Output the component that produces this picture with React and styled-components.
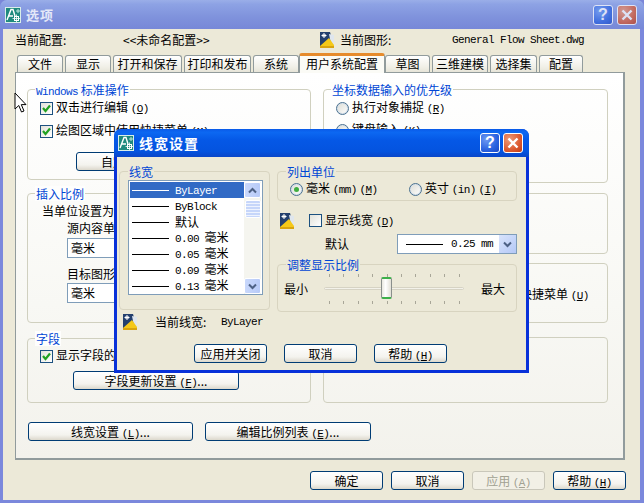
import React from "react";
import styled, { createGlobalStyle, css } from "styled-components";

const Global = createGlobalStyle`
  html, body { margin: 0; padding: 0; background: #7a86d8; }
  body { width: 644px; height: 503px; overflow: hidden; font-family: "Noto Sans CJK SC", "Liberation Sans", sans-serif; font-size: 12px; line-height: 14px; color: #000; }
`;

const Desktop = styled.div`
  position: relative; width: 644px; height: 503px; overflow: hidden;
`;
const Window = styled.div`
  display: flex; flex-direction: column; width: 644px; height: 503px; box-sizing: border-box;
  background: #7b88dc; border-radius: 7px 7px 0 0;
`;
const TitleBar = styled.div`
  height: ${p => p.$active ? 28 : 29}px; flex: none; display: flex; align-items: center; box-sizing: border-box;
  padding: ${p => p.$active ? "0 6px 0 4px" : "0 7px 0 5px"}; gap: 5px;
  border-radius: 7px 7px 0 0;
  background: ${p => p.$active
    ? "linear-gradient(180deg,#0a5ae8 0%,#0c68f2 12%,#0558e6 40%,#0453df 80%,#0a46c8 100%)"
    : "linear-gradient(180deg,#9aaee8 0%,#8da2e4 15%,#7f92dc 60%,#7788d8 100%)"};
`;
const TitleText = styled.span`
  flex: 1; font-weight: 700; font-size: ${p => p.$active ? 14 : 13}px; letter-spacing: 1px;
  color: ${p => p.$active ? "#fff" : "#e4e8f8"};
`;
const CapBtn = styled.div`
  width: 20px; height: 20px; box-sizing: border-box; border: 1px solid #fff; border-radius: 3px;
  display: flex; align-items: center; justify-content: center; margin-left: ${p => p.$gap || 0}px; opacity: ${p => p.$dim ? 0.72 : 1};
  background: ${p => p.$close
    ? "radial-gradient(circle at 30% 30%,#ee9a78,#dc5a30 60%,#bf3a14)"
    : "radial-gradient(circle at 30% 30%,#6d9af2,#2a62e0 60%,#1a48c4)"};
  color: #fff; font: 700 16px "Liberation Sans", sans-serif;
`;
const Client = styled.div`
  flex: 1; margin: 0 4px 3px 3px; background: #ece9d8; display: flex; flex-direction: column; padding: 0 14px 0 12px; min-height: 0;
`;
const ProfileRow = styled.div`
  height: 26px; flex: none; box-sizing: border-box; padding-bottom: 4px; display: grid; grid-template-columns: 108px 196px 21px 112px 1fr; align-items: center;
`;
const Lat = styled.span`
  font-family: "Liberation Mono", monospace; font-size: 11px; letter-spacing: -0.6px;
`;
const Tabs = styled.div`
  display: flex; height: 17px; align-items: flex-end; padding-left: 2px; flex: none; position: relative; z-index: 1;
`;
const Tab = styled.div`
  box-sizing: border-box; width: ${p => p.$w}px; margin-right: ${p => p.$m ?? 2}px; height: ${p => p.$on ? 20 : 17}px; text-align: center;
  line-height: 16px; border: 1px solid #919b9c; border-bottom: 0; border-radius: 3px 3px 0 0;
  background: ${p => p.$on ? "#fbfbf6" : "linear-gradient(180deg,#fff,#f0efe6 70%,#e6e4d8)"};
  ${p => p.$on && css`border-top: 3px solid #e68b2c; line-height: 15px; margin-bottom: -1px; position: relative; z-index: 2;`}
`;
const Panel = styled.div`
  height: 388px; flex: none; box-sizing: border-box; border: 1px solid #919b9c; border-right-width: 2px; border-bottom-width: 2px;
  width: 610px; background: linear-gradient(180deg,#fff 0%,#f8f8f4 60%,#f3f2ec 100%);
  padding: 16px 0 0 11px; display: flex; flex-direction: column;
`;
const Columns = styled.div`
  display: grid; grid-template-columns: 284px 285px; column-gap: 12px; height: 314px;
`;
const Col = styled.div`
  display: flex; flex-direction: column;
`;
const Group = styled.div`
  box-sizing: border-box; position: relative; height: ${p => p.$h}px; margin-bottom: ${p => p.$mb || 0}px;
  border: 1px solid #d0d0bf; border-radius: 4px; padding: ${p => p.$pad || "0"}; flex: none;
`;
const Legend = styled.span`
  position: absolute; top: -8px; left: ${p => p.$x || 7}px; padding: 0 1px; line-height: 15px; color: #0046d5;
  background: ${p => p.$bg || "#fefefd"};
`;
const CheckRow = styled.label`
  display: flex; align-items: center; gap: 3px; height: 14px; margin-left: ${p => p.$x || 0}px; margin-bottom: ${p => p.$mb || 0}px; white-space: nowrap;
`;
const Box = styled.span`
  width: 13px; height: 13px; box-sizing: border-box; flex: none; border: 1px solid #1c5180; display: flex; background: linear-gradient(135deg,#e2e2da,#fff);
`;
const Radio = styled.span`
  width: 13px; height: 13px; box-sizing: border-box; flex: none; border: 1px solid #4a7190; border-radius: 50%; display: flex; align-items: center; justify-content: center;
  background: linear-gradient(135deg,#dcdcd4,#fff); box-shadow: inset 0 0 0 1px #d6e0ea;
  &::after { content: ""; width: 5px; height: 5px; border-radius: 50%; background: ${p => p.$on ? "#3fae3f" : "transparent"}; }
`;
const Btn = styled.div`
  box-sizing: border-box; width: ${p => p.$w}px; height: 19px; flex: none; text-align: center; line-height: 17px; white-space: nowrap;
  border: 1px solid ${p => p.$off ? "#c9c7ba" : "#003c74"}; border-radius: 3px; color: ${p => p.$off ? "#a1a192" : "#000"};
  margin-left: ${p => p.$x || 0}px; margin-top: ${p => p.$top || 0}px;
  background: ${p => p.$off ? "#f2f0e6" : "linear-gradient(180deg,#fff,#f4f3ee 70%,#dcd8cc)"};
`;
const Indented = styled.div`
  margin-left: ${p => p.$x}px; height: ${p => p.$h || 14}px; white-space: nowrap;
`;
const Select = styled.div`
  box-sizing: border-box; margin: 3px 0 ${p => p.$mb || 0}px 39px; width: 120px; height: 20px; border: 1px solid #7f9db9; background: #fff; padding-left: 3px; line-height: 18px;
`;
const ButtonRow = styled.div`
  display: flex; gap: 12px; margin: 19px 0 0 1px;
`;
const Footer = styled.div`
  display: flex; justify-content: flex-end; gap: 8px; padding: 11px 0 0;
`;
const Cursor = styled.svg`
  position: absolute; left: 14px; top: 92px;
`;

/* dialog */
const Dialog = styled.div`
  position: absolute; left: 114px; top: 129px; width: 415px; height: 244px; box-sizing: border-box;
  background: #0831d9; border-radius: 7px 7px 0 0; display: flex; flex-direction: column; z-index: 5;
`;
const DialogClient = styled.div`
  flex: 1; margin: 0 3px 3px; background: #ece9d8; position: relative; display: grid;
  grid-template-columns: 151px 240px; column-gap: 7px; padding: 14px 0 0 2px; grid-template-rows: 140px auto;
`;
const DGroup = styled(Group)`
  border-color: #d8d4c0;
`;
const List = styled.div`
  box-sizing: border-box; margin: 8px 0 0 8px; width: 135px; height: 115px; border: 1px solid #7f9db9; background: #fff; padding: 1px;
  display: grid; grid-template-columns: 1fr 17px;
`;
const Rows = styled.div`
  display: flex; flex-direction: column;
`;
const Row = styled.div`
  height: 16px; display: flex; align-items: center; box-sizing: border-box; padding-left: 2px; white-space: nowrap;
  background: ${p => p.$on ? "#316ac5" : "transparent"}; color: ${p => p.$on ? "#fff" : "#000"};
  &::before { content: ""; width: 37px; height: 1px; background: currentColor; margin-right: 6px; flex: none; }
`;
const ScrollBar = styled.div`
  background: #f5f5ef; display: flex; flex-direction: column; justify-content: space-between; position: relative;
`;
const ScrollBtn = styled.div`
  height: 16px; box-sizing: border-box; border: 1px solid #fff; border-radius: 2px; background: linear-gradient(90deg,#c9d8fb,#b7caf8); display: flex; align-items: center; justify-content: center;
`;
const Thumb = styled.div`
  position: absolute; top: 18px; left: 1px; right: 0; height: 18px; border: 1px solid #fff; border-radius: 2px; box-sizing: border-box;
  background: repeating-linear-gradient(180deg,#c6d6fa 0 2px,#eef3fe 2px 3px);
`;
const Current = styled.div`
  display: grid; grid-template-columns: 33px 66px auto; align-items: center; margin: 1px 0 0 3px; grid-column: 1; height: 20px; white-space: nowrap;
`;
const RightStack = styled.div`
  display: flex; flex-direction: column; grid-row: 1 / span 2; grid-column: 2;
`;
const Units = styled.div`
  display: grid; grid-template-columns: 119px auto; padding: 10px 0 0 12px;
`;
const ShowRow = styled.div`
  display: grid; grid-template-columns: 30px auto; height: 19px; margin: 10px 0 0 2px; align-items: center;
`;
const DefaultRow = styled.div`
  display: grid; grid-template-columns: 120px 120px; align-items: center; margin: 4px 0 10px; height: 20px;
`;
const Combo = styled.div`
  box-sizing: border-box; width: 120px; height: 20px; border: 1px solid #7f9db9; background: #fff; display: flex; align-items: center; padding-left: 8px;
  &::before { content: ""; width: 37px; height: 1px; background: #000; margin-right: 8px; }
`;
const ComboBtn = styled.div`
  margin-left: auto; width: 17px; height: 18px; background: linear-gradient(135deg,#d9e4fc,#b4c8f6); display: flex; align-items: center; justify-content: center;
`;
const SliderRow = styled.div`
  display: grid; grid-template-columns: 40px 140px 1fr; align-items: center; height: 47px; padding-left: 6px;
`;
const MaxLabel = styled.span`
  padding-left: 17px; white-space: nowrap;
`;
const Slider = styled.div`
  position: relative; height: 36px; width: 140px;
`;
const Track = styled.div`
  position: absolute; left: 0; right: 0; top: 16px; height: 3px; background: #f3f2ea; border: 1px solid #d6d3c4; border-radius: 2px; box-sizing: border-box;
`;
const Ticks = styled.div`
  position: absolute; left: 5px; top: ${p => p.$top}px; display: flex; gap: 13.4px;
`;
const Tick = styled.i`
  width: 1px; height: 3px; background: #a8a698; display: block;
`;
const Handle = styled.div`
  position: absolute; left: 57px; top: 6px; width: 11px; height: 22px; box-sizing: border-box; border: 1px solid #8a8f8c; border-radius: 2px;
  background: linear-gradient(90deg,#e9e8df,#fff 40%,#e2e0d6);
  border-top: 2px solid #3cb04a; border-bottom: 2px solid #3cb04a;
`;
const DialogFooter = styled.div`
  position: absolute; left: 77px; bottom: 7px; display: flex; gap: 17px;
`;

const Key = ({ k }) => <Lat>(<u>{k}</u>)</Lat>;

const AppIcon = () => (
  <svg width="16" height="16" viewBox="0 0 16 16" style={{ flex: "none" }}>
    <rect width="16" height="16" fill="#1f8a7e" />
    <rect x="0.5" y="0.5" width="15" height="15" fill="none" stroke="#d9eee9" />
    <path d="M2 13 L6 2.5 H8 L10 9 M4 9 H8" stroke="#fff" strokeWidth="1.4" fill="none" />
    <path d="M13 2 V6 M11 4 H15" stroke="#bfe5dc" strokeWidth="1" />
    <rect x="9.5" y="9.5" width="4" height="4" fill="none" stroke="#fff" />
    <path d="M11.5 7.5 V15 M7.5 11.5 H15" stroke="#fff" strokeWidth="0.8" />
  </svg>
);
const DwgIcon = () => (
  <svg width="16" height="18" viewBox="0 0 16 18" style={{ flex: "none", display: "block" }}>
    <path d="M1 1 H11 L15 15 H1 Z" fill="#24406e" />
    <path d="M10 3 L15 4 V15 L12 13 Z" fill="#dfe6ee" />
    <path d="M1 15 L10 7 L15 14 V17 H1 Z" fill="#f5c818" />
    <path d="M1 15 V17 H15 V15 Z" fill="#d9a40e" />
    <path d="M5 2 V7 M2.5 4.5 H7.5 M3.5 3 L6.5 6 M6.5 3 L3.5 6" stroke="#fff" strokeWidth="1" />
  </svg>
);
const Check = () => (
  <svg width="11" height="11" viewBox="0 0 11 11"><path d="M2 5 L4.5 8 L9 2.5" stroke="#21a121" strokeWidth="2.2" fill="none" /></svg>
);
const Chev = ({ up, c = "#4d6185" }) => (
  <svg width="9" height="7" viewBox="0 0 9 7"><path d={up ? "M1 5.5 L4.5 2 L8 5.5" : "M1 1.5 L4.5 5 L8 1.5"} stroke={c} strokeWidth="2" fill="none" /></svg>
);
const XMark = () => (
  <svg width="12" height="12" viewBox="0 0 12 12"><path d="M1.5 1.5 L10.5 10.5 M10.5 1.5 L1.5 10.5" stroke="#fff" strokeWidth="2.4" /></svg>
);

const tabs = [["文件", 46], ["显示", 46], ["打开和保存", 69], ["打印和发布", 67, 2], ["系统", 46, 0], ["用户系统配置", 86, 0, true], ["草图", 45], ["三维建模", 56], ["选择集", 47], ["配置", 44]];
const rows = [["ByLayer", true, true], ["ByBlock", false, true], ["默认"], ["0.00", 0, 0, 1], ["0.05", 0, 0, 1], ["0.09", 0, 0, 1], ["0.13", 0, 0, 1]];
const ticks = Array.from({ length: 10 }, (_, i) => i);

export default function App() {
  return (
    <Desktop>
      <Global />
      <Window>
        <TitleBar>
          <AppIcon />
          <TitleText>选项</TitleText>
          <CapBtn $dim>?</CapBtn>
          <CapBtn $close $dim $gap={-1}><XMark /></CapBtn>
        </TitleBar>
        <Client>
          <ProfileRow>
            <span>当前配置:</span>
            <span>&lt;&lt;未命名配置&gt;&gt;</span>
            <DwgIcon />
            <span>当前图形:</span>
            <Lat>General Flow Sheet.dwg</Lat>
          </ProfileRow>
          <Tabs>
            {tabs.map(([t, w, m, on]) => <Tab key={t} $w={w} $m={m} $on={on}>{t}</Tab>)}
          </Tabs>
          <Panel>
            <Columns>
              <Col>
                <Group $h={91} $mb={13} $pad="11px 0 0 12px">
                  <Legend><Lat>Windows</Lat> 标准操作</Legend>
                  <CheckRow $mb={9}><Box><Check /></Box><span>双击进行编辑 <Key k="O" /></span></CheckRow>
                  <CheckRow><Box><Check /></Box><span>绘图区域中使用快捷菜单 <Key k="M" /></span></CheckRow>
                  <Btn $w={165} $x={36} $top={14}>自定义右键单击 <Key k="I" />...</Btn>
                </Group>
                <Group $h={130} $mb={15} $pad="10px 0 0">
                  <Legend>插入比例</Legend>
                  <Indented $x={14} $h={17}>当单位设置为无单位时的默认设置:</Indented>
                  <Indented $x={39}>源内容单位:</Indented>
                  <Select $mb={9}>毫米</Select>
                  <Indented $x={39} $h={13}>目标图形单位:</Indented>
                  <Select>毫米</Select>
                </Group>
                <Group $h={65} $pad="10px 0 0 12px">
                  <Legend>字段</Legend>
                  <CheckRow $mb={8}><Box><Check /></Box><span>显示字段的背景 <Key k="B" /></span></CheckRow>
                  <Btn $w={166} $x={33}>字段更新设置 <Key k="F" />...</Btn>
                </Group>
              </Col>
              <Col>
                <Group $h={94} $mb={10} $pad="11px 0 0 12px">
                  <Legend>坐标数据输入的优先级</Legend>
                  <CheckRow $mb={8}><Radio /><span>执行对象捕捉 <Key k="R" /></span></CheckRow>
                  <CheckRow><Radio /><span>键盘输入 <Key k="K" /></span></CheckRow>
                </Group>
                <Group $h={61} $mb={9} />
                <Group $h={60} $mb={14} $pad="24px 0 0 0">
                  <CheckRow $x={12}><Box /><span>显示超链接光标、工具栏提示和快捷菜单 <Key k="U" /></span></CheckRow>
                </Group>
                <Group $h={66} />
              </Col>
            </Columns>
            <ButtonRow>
              <Btn $w={165}>线宽设置 <Key k="L" />...</Btn>
              <Btn $w={166}>编辑比例列表 <Key k="E" />...</Btn>
            </ButtonRow>
          </Panel>
          <Footer>
            <Btn $w={73}>确定</Btn>
            <Btn $w={73}>取消</Btn>
            <Btn $w={73} $off>应用 <Key k="A" /></Btn>
            <Btn $w={73}>帮助 <Key k="H" /></Btn>
          </Footer>
        </Client>
      </Window>

      <Cursor width="13" height="22" viewBox="0 0 13 22">
        <path d="M1 1 V17 L4.8 13.5 L7.5 20 L10 19 L7.3 12.6 H12 Z" fill="#fff" stroke="#000" />
      </Cursor>

      <Dialog>
        <TitleBar $active>
          <AppIcon />
          <TitleText $active>线宽设置</TitleText>
          <CapBtn>?</CapBtn>
          <CapBtn $close $gap={-2}><XMark /></CapBtn>
        </TitleBar>
        <DialogClient>
          <DGroup $h={139}>
            <Legend $bg="#ece9d8" $x={8}>线宽</Legend>
            <List>
              <Rows>
                {rows.map(([t, on, lat, mm]) => (
                  <Row key={t} $on={on}><span>{lat || mm ? <Lat>{t}</Lat> : t}{mm ? <>&nbsp; 毫米</> : null}</span></Row>
                ))}
              </Rows>
              <ScrollBar>
                <ScrollBtn><Chev up /></ScrollBtn>
                <Thumb />
                <ScrollBtn><Chev /></ScrollBtn>
              </ScrollBar>
            </List>
          </DGroup>
          <Current>
            <DwgIcon />
            <span>当前线宽:</span>
            <Lat>ByLayer</Lat>
          </Current>
          <RightStack>
            <DGroup $h={30}>
              <Legend $bg="#ece9d8" $x={8}>列出单位</Legend>
              <Units>
                <CheckRow><Radio $on /><span>毫米 <Lat>(mm)</Lat> <Key k="M" /></span></CheckRow>
                <CheckRow><Radio /><span>英寸 <Lat>(in)</Lat> <Key k="I" /></span></CheckRow>
              </Units>
            </DGroup>
            <ShowRow>
              <DwgIcon />
              <CheckRow><Box /><span>显示线宽 <Key k="D" /></span></CheckRow>
            </ShowRow>
            <DefaultRow>
              <Indented $x={48}>默认</Indented>
              <Combo>
                <Lat>0.25 mm</Lat>
                <ComboBtn><Chev /></ComboBtn>
              </Combo>
            </DefaultRow>
            <DGroup $h={48}>
              <Legend $bg="#ece9d8" $x={8}>调整显示比例</Legend>
              <SliderRow>
                <span>最小</span>
                <Slider>
                  <Ticks $top={3}>{ticks.map(i => <Tick key={i} />)}</Ticks>
                  <Track />
                  <Handle />
                  <Ticks $top={30}>{ticks.map(i => <Tick key={i} />)}</Ticks>
                </Slider>
                <MaxLabel>最大</MaxLabel>
              </SliderRow>
            </DGroup>
          </RightStack>
          <DialogFooter>
            <Btn $w={73}>应用并关闭</Btn>
            <Btn $w={73}>取消</Btn>
            <Btn $w={73}>帮助 <Key k="H" /></Btn>
          </DialogFooter>
        </DialogClient>
      </Dialog>
    </Desktop>
  );
}
